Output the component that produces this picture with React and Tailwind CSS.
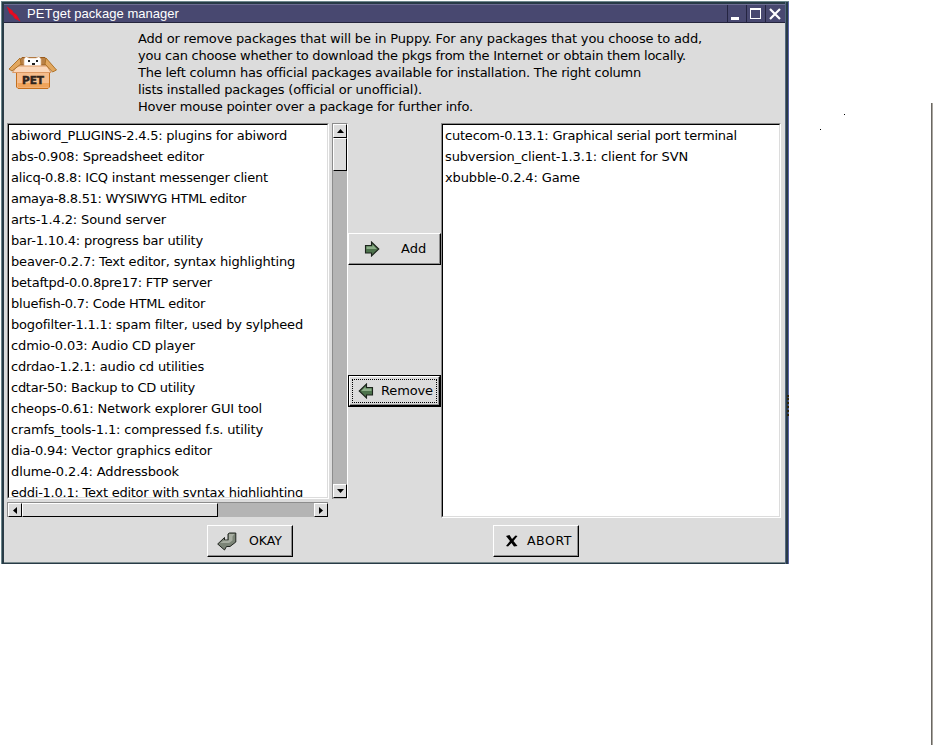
import React, { useLayoutEffect, useRef, useState } from "react";

const intro = [
  ["Add or remove packages that will be in Puppy. For any packages that you choose to add,", 564],
  ["you can choose whether to download the pkgs from the Internet or obtain them locally.", 548],
  ["The left column has official packages available for installation. The right column", 503],
  ["lists installed packages (official or unofficial).", 284],
  ["Hover mouse pointer over a package for further info.", 335],
];

const available = [
  ["abiword_PLUGINS-2.4.5: plugins for abiword", 276],
  ["abs-0.908: Spreadsheet editor", 193],
  ["alicq-0.8.8: ICQ instant messenger client", 257],
  ["amaya-8.8.51: WYSIWYG HTML editor", 235],
  ["arts-1.4.2: Sound server", 155],
  ["bar-1.10.4: progress bar utility", 192],
  ["beaver-0.2.7: Text editor, syntax highlighting", 284],
  ["betaftpd-0.0.8pre17: FTP server", 201],
  ["bluefish-0.7: Code HTML editor", 194],
  ["bogofilter-1.1.1: spam filter, used by sylpheed", 292],
  ["cdmio-0.03: Audio CD player", 184],
  ["cdrdao-1.2.1: audio cd utilities", 193],
  ["cdtar-50: Backup to CD utility", 184],
  ["cheops-0.61: Network explorer GUI tool", 251],
  ["cramfs_tools-1.1: compressed f.s. utility", 252],
  ["dia-0.94: Vector graphics editor", 201],
  ["dlume-0.2.4: Addressbook", 168],
  ["eddi-1.0.1: Text editor with syntax highlighting", 292],
];

const installed = [
  ["cutecom-0.13.1: Graphical serial port terminal", 292],
  ["subversion_client-1.3.1: client for SVN", 243],
  ["xbubble-0.2.4: Game", 135],
];

// Spreads a line's letters so that the line takes the given width.
function Line({ text, width }) {
  const ref = useRef(null);
  const [spacing, setSpacing] = useState(0);
  useLayoutEffect(() => {
    const natural = ref.current.getBoundingClientRect().width;
    setSpacing((width - natural) / text.length);
  }, [text, width]);
  return (
    <span ref={ref} className="inline-block whitespace-nowrap [font-variant-ligatures:none]" style={{ letterSpacing: `${spacing}px` }}>
      {text}
    </span>
  );
}

const raised =
  "bg-[#dcdcdc] border border-t-white border-l-white border-r-black border-b-black shadow-[inset_-1px_-1px_0_#8e8e8e]";
const thumb = "border border-b-black border-l-white border-r-black border-t-white bg-[#dcdcdc]";

function PetIcon() {
  return (
    <svg width="50" height="36" viewBox="0 0 50 36" className="block">
      <path d="M8 10 L14 2.500 H37 L43 10 Z" fill="#b98146" stroke="#9a5a1c" />
      <path d="M16 12 V4 L18 1.500 L21 3 H28 L31 1.500 L33 4 V12 Z" fill="#fff" stroke="#dcb48c" strokeWidth=".7" />
      <path d="M20 5h2v2h-2zM28 5h2v2h-2zM24 8h3v2h-3z" fill="#222" />
      <path d="M8.500 16 H41.500 V32 L40 33.500 H10 L8.500 32 Z" fill="#f6bd8c" stroke="#c46f1c" />
      <path d="M9.500 28 H41 V32.500 H10 Z" fill="#f0a45a" />
      <path d="M9 11 H39 L43 17.500 H4.500 Z" fill="#fbd8bb" stroke="#dc9862" />
      <path d="M12 3 L1 14 L4 16 L13 9 Z M38 3 L48.500 15 L44.500 17 L37 9 Z" fill="#e2a75e" stroke="#a86c20" strokeWidth=".9" />
      <text x="25" y="29" textAnchor="middle" fontFamily="DejaVu Sans" fontWeight="700" fontSize="10.500" textLength="22" lengthAdjust="spacingAndGlyphs" fill="#30241c" stroke="#30241c" strokeWidth=".5">PET</text>
    </svg>
  );
}

function Arrow({ flip }) {
  return (
    <svg width="16" height="16" viewBox="0 0 16 16" className={flip ? "block -scale-x-100" : "block"}>
      <path d="M1.500 4.500 H7.500 V1 L14.800 8 L7.500 15 V12 H1.500 Z" fill="#4d734c" stroke="#1d241d" strokeWidth="1.100" />
      <path d="M2.500 5.500 H8.500 V3.500 L12.800 8 H2.500 Z" fill="#8cae88" />
    </svg>
  );
}

function OkayIcon() {
  return (
    <svg width="20" height="19" viewBox="0 0 20 19" className="block">
      <path d="M11 2 L12.500 1 H18.800 V10 L13 14.500 H9.500 L7.500 18 L.7 12 L7.500 5.500 V8 H11 Z" fill="#7b8476" stroke="#20241f" />
      <path d="M12 2 H17.500 L15.500 4.500 V8.500 L12 11 H3 L7 8.500 H12 Z" fill="#a7ada1" />
    </svg>
  );
}

function AbortIcon() {
  return (
    <svg width="12" height="12" viewBox="0 0 12 12" className="block">
      <path d="M0 1 L3.500 0 L6 4 L9.500 .5 L11.500 1 L7.500 6 L11.500 11 L8 11.500 L5.500 8 L2 11.500 L0 11 L4 6 Z" fill="#000" />
    </svg>
  );
}

function Triangle({ dir }) {
  const points = { up: "0,4 3.5,0 7,4", down: "0,0 7,0 3.5,4", left: "4,0 4,7 0,3.5", right: "0,0 4,3.5 0,7" }[dir];
  const horizontal = dir === "left" || dir === "right";
  return (
    <svg width={horizontal ? 4 : 7} height={horizontal ? 7 : 4} className="block">
      <polygon points={points} fill="#000" />
    </svg>
  );
}

function ListBox({ items, className }) {
  return (
    <div className={`border-t border-l border-t-[#8c8c8c] border-l-[#8c8c8c] border-r border-b border-r-white border-b-white ${className}`}>
      <ul className="h-full overflow-hidden whitespace-nowrap border-t border-l border-r border-b border-t-black border-l-black border-r-[#dcdcdc] border-b-[#dcdcdc] bg-white pl-[2px] pt-px">
        {items.map(([text, width]) => (
          <li key={text} className="h-[21px] leading-[20px]"><Line text={text} width={width} /></li>
        ))}
      </ul>
    </div>
  );
}

export default function App() {
  return (
    <div className="flex h-[745px] w-[933px] overflow-hidden bg-white font-['DejaVu_Sans',sans-serif] text-[13px] text-black">
      <div className="relative ml-px mt-px h-[563px] w-[788px] border-l border-t border-[#6b858b] bg-[#283b46] pl-[2px] pt-[2px]">
        <div className="flex h-[19px] w-[781px] items-center border-b border-t border-b-[#24243c] border-t-[#6d6d93] bg-[#484870] font-['Liberation_Sans',sans-serif] text-white">
          <svg width="18" height="16" className="block">
            <path d="M4 2 L8 5 L9 7 L12 9 L15 14 L11 12 L9 9 L6 7 Z" fill="#f00b20" stroke="#e00c22" strokeWidth="1.200" />
          </svg>
          <span className="ml-[5px] grow text-[13px] leading-[17px]"><Line text="PETget package manager" width={152} /></span>
          <div className="flex h-full items-center">
            <span className="flex h-full w-[19px] items-center border-l border-[#242441] pl-[3px]"><i className="mt-[9px] h-[3px] w-[8px] bg-white" /></span>
            <span className="flex h-full w-[19px] items-center border-l border-[#242441] pl-[3px]"><i className="h-[11px] w-[11px] border border-t-2 border-white" /></span>
            <span className="flex h-full w-[20px] items-center border-l border-[#242441] pl-[3px]">
              <svg width="12" height="12" className="block"><path d="M1 1 L11 11 M11 1 L1 11" stroke="#fff" strokeWidth="2.200" /></svg>
            </span>
          </div>
        </div>

        <div className="h-[540px] w-[781px] border-b border-[#7b8a8d] bg-[#dcdcdc]">
          <header className="flex h-[100px]">
            <div className="w-[134px] pl-[4px] pt-[32px]"><PetIcon /></div>
            <div className="whitespace-nowrap pt-[7px] leading-[17px]">
              {intro.map(([text, width]) => <p key={text} className="h-[17px]"><Line text={text} width={width} /></p>)}
            </div>
          </header>

          <main className="flex h-[395px] pl-[3px]">
            <div className="w-[322px]">
              <ListBox items={available} className="h-[376px]" />
              <div className="mt-[3px] flex h-[15px] w-[321px] border-l border-t border-[#8c8c8c] bg-[#b4b4b4]">
                <div className={`flex w-[14px] items-center justify-center ${thumb}`}><Triangle dir="left" /></div>
                <div className={`w-[196px] ${thumb}`} />
                <div className="grow" />
                <div className={`flex w-[14px] items-center justify-center ${thumb}`}><Triangle dir="right" /></div>
              </div>
            </div>
            <div className="ml-[3px] flex h-[376px] w-[16px] flex-col border-l border-t border-r border-l-[#8c8c8c] border-t-[#8c8c8c] border-r-white bg-[#b4b4b4]">
              <div className={`flex h-[14px] items-center justify-center ${thumb}`}><Triangle dir="up" /></div>
              <div className={`h-[33px] ${thumb}`} />
              <div className="grow" />
              <div className={`mb-px flex h-[14px] items-center justify-center ${thumb}`}><Triangle dir="down" /></div>
            </div>
            <div className="w-[93px] pt-[110px]">
              <button className={`flex h-[32px] w-[93px] items-center ${raised} pl-[15px]`}>
                <Arrow /><span className="ml-[21px]">Add</span>
              </button>
              <button className="mt-[110px] flex h-[32px] w-[93px] border border-black">
                <span className={`flex h-full w-full ${raised} p-[2px]`}>
                  <span className="flex w-full items-center border border-dotted border-black pl-[5px] text-left">
                    <Arrow flip /><span className="ml-[7px]"><Line text="Remove" width={52} /></span>
                  </span>
                </span>
              </button>
            </div>
            <ListBox items={installed} className="h-[395px] w-[340px]" />
          </main>

          <footer className="flex pl-[203px] pt-[7px]">
            <button className={`flex h-[32px] w-[86px] items-center ${raised} pl-[9px]`}>
              <OkayIcon /><span className="ml-[12px] pt-px text-[12.500px]"><Line text="OKAY" width={33} /></span>
            </button>
            <button className={`ml-[200px] flex h-[32px] w-[86px] items-center ${raised} pl-[12px]`}>
              <AbortIcon /><span className="ml-[9px] pt-px text-[12.500px]"><Line text="ABORT" width={45} /></span>
            </button>
          </footer>
        </div>
        <i className="absolute right-0 top-0 h-full w-px bg-[#5b63a5]" />
        <i className="absolute right-[3px] top-0 h-full w-px bg-[#53667f]" />
        <i className="absolute right-0 top-[393px] h-[21px] w-[2px] border-r-2 border-dotted border-[#30260c]" />
      </div>
      <div className="relative grow">
        <i className="absolute left-[55px] top-[114px] size-px bg-black" />
        <i className="absolute left-[31px] top-[129px] size-px bg-black" />
        <i className="absolute right-0 top-[103px] h-[642px] w-[2px] border-r border-[#aaa7a1] bg-[#6a6762]" />
      </div>
    </div>
  );
}
